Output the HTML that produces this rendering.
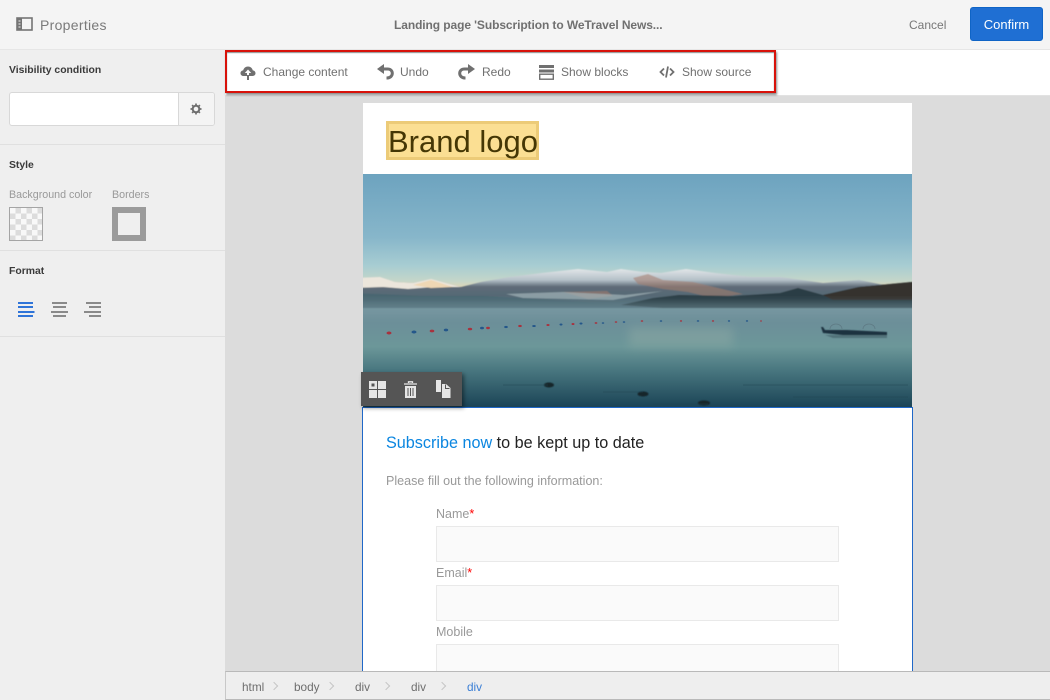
<!DOCTYPE html>
<html><head><meta charset="utf-8">
<style>
html,body{margin:0;padding:0}
body{width:1050px;height:700px;position:relative;overflow:hidden;background:#dcdcdc;font-family:"Liberation Sans",sans-serif;color:#6e6e6e}
.a{position:absolute;white-space:nowrap}
svg{position:absolute;overflow:visible}
.lb{font-size:12px;line-height:16px;color:#707070}
.h{font-size:10.4px;font-weight:bold;color:#3a3a3a;line-height:14px}
.sl{font-size:10.7px;color:#999;line-height:14px}
.fl{font-size:12.5px;color:#999;line-height:14px}
.in{position:absolute;left:436px;width:401px;height:34px;background:#fafafa;border:1px solid #e9e9e9}
.bc{font-size:11.8px;line-height:14px;color:#6e6e6e;top:680px}
.ch{position:absolute;top:683px;width:5px;height:5px;border-top:1px solid #c6c6c6;border-right:1px solid #c6c6c6;transform:rotate(45deg)}
</style></head><body>
<div class="a" style="left:0;top:0;width:1050px;height:50px;background:#f4f4f4;border-bottom:1px solid #e6e6e6;box-sizing:border-box"></div>
<svg style="left:16px;top:17px" width="17" height="15" viewBox="0 0 17 15"><rect x="1" y="1" width="15" height="12" fill="none" stroke="#747474" stroke-width="1.6"/><rect x="1" y="1" width="5" height="12" fill="#747474"/><path d="M2.500 4h2M2.500 7h2M2.500 10h2" stroke="#f4f4f4" stroke-width="1"/></svg>
<div class="a" style="left:40px;top:16px;font-size:14px;line-height:18px;color:#7a7a7a;letter-spacing:.3px">Properties</div>
<div class="a" style="left:394px;top:17px;font-size:12px;line-height:16px;font-weight:bold;color:#707070;letter-spacing:-.09px">Landing page 'Subscription to WeTravel News...</div>
<div class="a" style="left:909px;top:17px;font-size:12px;line-height:16px;color:#777">Cancel</div>
<div class="a" style="left:970px;top:7px;width:73px;height:34px;background:#1f6fd3;border:1px solid #0f64c6;box-sizing:border-box;border-radius:3px;color:#fff;font-size:13px;line-height:34px;text-align:center">Confirm</div>

<!-- sidebar -->
<div class="a" style="left:0;top:50px;width:225px;height:650px;background:#efefef"></div>
<div class="a h" style="left:9px;top:64px">Visibility condition</div>
<div class="a" style="left:9px;top:92px;width:206px;height:34px;box-sizing:border-box;background:#fff;border:1px solid #d8d8d8;border-radius:3px"></div>
<div class="a" style="left:178px;top:93px;width:36px;height:32px;box-sizing:border-box;background:#f4f4f4;border-left:1px solid #d8d8d8;border-radius:0 2px 2px 0"></div>
<svg style="left:190px;top:103px" width="12" height="12" viewBox="0 0 12 12"><circle cx="6" cy="6" r="3.300" fill="none" stroke="#6e6e6e" stroke-width="2"/><path d="M6 .5v2M6 9.500v2M.5 6h2M9.500 6h2M2.100 2.100l1.400 1.400M8.500 8.500l1.400 1.400M2.100 9.900l1.400-1.400M8.500 3.500l1.400-1.400" stroke="#6e6e6e" stroke-width="1.700"/></svg>
<div class="a" style="left:0;top:144px;width:225px;height:1px;background:#e0e0e0"></div>
<div class="a h" style="left:9px;top:159px">Style</div>
<div class="a sl" style="left:9px;top:188px">Background color</div>
<div class="a sl" style="left:112px;top:188px">Borders</div>
<div class="a" style="left:9px;top:207px;width:34px;height:34px;box-sizing:border-box;border:1px solid #a5a5a5;background-color:#f8f8f8;background-image:linear-gradient(45deg,#dcdcdc 25%,transparent 25%,transparent 75%,#dcdcdc 75%),linear-gradient(45deg,#dcdcdc 25%,transparent 25%,transparent 75%,#dcdcdc 75%);background-size:11px 11px;background-position:0 0,5.500px 5.500px"></div>
<div class="a" style="left:112px;top:207px;width:34px;height:34px;box-sizing:border-box;border:6px solid #9b9b9b;background:#efefef"></div>
<div class="a" style="left:0;top:250px;width:225px;height:1px;background:#e0e0e0"></div>
<div class="a h" style="left:9px;top:265px">Format</div>
<svg style="left:18px;top:302px" width="84" height="16" viewBox="0 0 84 16">
<path d="M0 1h15M0 5h15M0 10h16.500M0 14h15" stroke="#2f74d8" stroke-width="2" fill="none"/>
<path d="M34 1h15M35 5h13M33 10h17M35 14h13" stroke="#8a8a8a" stroke-width="2" fill="none"/>
<path d="M68 1h15M71 5h12M66 10h17M71 14h12" stroke="#8a8a8a" stroke-width="2" fill="none"/>
</svg>
<div class="a" style="left:0;top:336px;width:225px;height:1px;background:#e0e0e0"></div>

<!-- toolbar -->
<div class="a" style="left:225px;top:50px;width:825px;height:46px;background:#fff;border-bottom:1px solid #e2e2e2;box-sizing:border-box"></div>
<div class="a" style="left:225px;top:50px;width:551px;height:43px;box-sizing:border-box;border:2px solid #d8120a;box-shadow:1px 2px 2px rgba(0,0,0,.45),inset 0 1px 1px rgba(0,0,0,.45);background:#fff"></div>
<svg style="left:240px;top:65px" width="16" height="15" viewBox="0 0 16 15"><path d="M3.500 11C1.500 11 .5 9.500.5 8.200.5 6.700 1.700 5.500 3.200 5.400 3.800 3 5.700 1.500 8 1.500c2.300 0 4.200 1.500 4.800 3.900 1.500.1 2.700 1.300 2.700 2.800 0 1.300-1 2.800-3 2.800z" fill="#707070"/><path d="M8 4.500 4.800 8H7v3h2V8h2.200z" fill="#fff"/><rect x="7" y="10" width="2" height="5" fill="#707070"/></svg>
<div class="a lb" style="left:263px;top:64px">Change content</div>
<svg style="left:377px;top:64px" width="17" height="16" viewBox="0 0 17 16"><path d="M7 0v10L0 5z" fill="#707070"/><path d="M6 5h4.500c3 0 4.800 1.800 4.800 4.300S13.500 14 9.500 14" fill="none" stroke="#707070" stroke-width="3"/></svg>
<div class="a lb" style="left:400px;top:64px">Undo</div>
<svg style="left:458px;top:64px" width="17" height="16" viewBox="0 0 17 16"><path d="M10 0v10l7-5z" fill="#707070"/><path d="M11 5H6.500C3.500 5 1.700 6.800 1.700 9.300S3.500 14 7.500 14" fill="none" stroke="#707070" stroke-width="3"/></svg>
<div class="a lb" style="left:482px;top:64px">Redo</div>
<svg style="left:539px;top:65px" width="15" height="15" viewBox="0 0 15 15"><path d="M0 0h15v3H0zM0 4.500h15v3H0z" fill="#707070"/><rect x=".7" y="9.200" width="13.600" height="5" fill="none" stroke="#707070" stroke-width="1.400"/></svg>
<div class="a lb" style="left:561px;top:64px">Show blocks</div>
<svg style="left:659px;top:66px" width="16" height="12" viewBox="0 0 16 12"><path d="M5 2.500 1.500 6 5 9.500M11 2.500 14.500 6 11 9.500" fill="none" stroke="#707070" stroke-width="1.800"/><path d="M9 .5 7 11.500" stroke="#707070" stroke-width="1.800"/></svg>
<div class="a lb" style="left:682px;top:64px">Show source</div>

<!-- page -->
<div class="a" style="left:363px;top:103px;width:549px;height:597px;background:#fff"></div>
<div class="a" style="left:386px;top:121px;width:153px;height:39px;box-sizing:border-box;background:#fbdf93;border:3px solid #eccb78;color:#453705;font-size:31px;line-height:35px;text-indent:-1px">Brand logo</div>

<svg style="left:363px;top:174px;overflow:hidden" width="549" height="233" viewBox="0 0 549 233">
<defs>
<linearGradient id="s" x1="0" y1="0" x2="0" y2="1"><stop offset="0" stop-color="#6da3bf"/><stop offset=".55" stop-color="#87b6ca"/><stop offset=".8" stop-color="#a8cdd2"/><stop offset=".93" stop-color="#c5d6c9"/><stop offset="1" stop-color="#e6d7b2"/></linearGradient>
<linearGradient id="w" x1="0" y1="0" x2="0" y2="1"><stop offset="0" stop-color="#6f909b"/><stop offset=".2" stop-color="#6c8f99"/><stop offset=".42" stop-color="#6c9799"/><stop offset=".65" stop-color="#48767f"/><stop offset="1" stop-color="#1b4456"/></linearGradient>
<linearGradient id="m" gradientUnits="userSpaceOnUse" x1="0" y1="95" x2="0" y2="132"><stop offset="0" stop-color="#e2e6e8"/><stop offset=".3" stop-color="#b4c0c8"/><stop offset=".48" stop-color="#5f6c78"/><stop offset="1" stop-color="#4a6572"/></linearGradient>
<filter id="b1"><feGaussianBlur stdDeviation=".6"/></filter>
<filter id="b4" x="-20%" y="-80%" width="140%" height="260%"><feGaussianBlur stdDeviation="5"/></filter>
</defs>
<rect width="549" height="115" fill="url(#s)"/>
<rect y="129" width="549" height="104" fill="url(#w)"/>
<g filter="url(#b1)">
<path d="M-10 104 17 103 32 108 50 109 68 105 98 113 118 108 147 103 179 99 215 95 244 98 258 95 280 98 298 99 323 95 352 99 388 103 417 103 460 109 496 106 521 111 560 112V134H-10z" fill="url(#m)"/>
<path d="M-10 104 17 103 32 108 50 109 68 105 98 113 70 113 45 115 20 113-10 114z" fill="#ece6dc"/>
<path d="M50 111 68 106 90 113 68 114z" fill="#efd7b4"/>
<path d="M270 104 285 100 300 106 330 108 380 120 350 124 325 118 300 115 275 110z" fill="#a67c6c" opacity=".55"/>
<path d="M200 118 244 117 250 122 225 125z" fill="#a17a6b" opacity=".6"/>
<path d="M143 120 200 118 262 121 300 117 250 126 160 124z" fill="#a3b3b8" opacity=".7"/>
<path d="M-10 119 60 122 120 122 190 126 258 131-10 133z" fill="#4a6671"/>
<path d="M258 131 290 124 316 121 370 122 417 119 435 114 460 121 496 113 548 108 560 107V134H300z" fill="#2c3d44"/>
<path d="M460 121 496 113 560 107V126H470z" fill="#34332f"/>
</g>
<rect x="-20" y="130" width="590" height="10" fill="#7f9da5" opacity=".65" filter="url(#b4)"/>
<rect x="266" y="153" width="104" height="20" fill="#a3b7aa" opacity=".3" filter="url(#b4)"/>
<g fill="#24578a"><ellipse cx="51" cy="158" rx="2.500" ry="1.500"/><ellipse cx="83" cy="156" rx="2.200" ry="1.400"/><ellipse cx="119" cy="154" rx="2" ry="1.300"/><ellipse cx="143" cy="153" rx="1.800" ry="1.100"/><ellipse cx="171" cy="152" rx="1.800" ry="1"/><ellipse cx="198" cy="150.500" rx="1.500" ry="1"/><ellipse cx="218" cy="149.500" rx="1.500" ry="1"/><ellipse cx="240" cy="149" rx="1.300" ry=".8"/><ellipse cx="261" cy="148" rx="1.300" ry=".8"/><ellipse cx="298" cy="147" rx="1.300" ry=".8"/><ellipse cx="335" cy="147" rx="1.300" ry=".7"/><ellipse cx="366" cy="147" rx="1.200" ry=".7"/><ellipse cx="384" cy="147" rx="1.200" ry=".7"/></g>
<g fill="#a8323e"><ellipse cx="26" cy="159" rx="2.500" ry="1.500"/><ellipse cx="69" cy="157" rx="2.300" ry="1.400"/><ellipse cx="107" cy="155" rx="2.200" ry="1.300"/><ellipse cx="125" cy="154" rx="1.900" ry="1.200"/><ellipse cx="157" cy="152" rx="1.800" ry="1.100"/><ellipse cx="185" cy="151" rx="1.600" ry="1"/><ellipse cx="210" cy="150" rx="1.500" ry="1"/><ellipse cx="233" cy="149" rx="1.400" ry=".9"/><ellipse cx="253" cy="148" rx="1.300" ry=".8"/><ellipse cx="279" cy="147" rx="1.300" ry=".8"/><ellipse cx="318" cy="147" rx="1.200" ry=".7"/><ellipse cx="350" cy="147" rx="1.200" ry=".7"/><ellipse cx="398" cy="147" rx="1" ry=".6"/></g>
<g filter="url(#b1)"><path d="M458 153h2l2 3h22l40 2v3h-44l-20-2z" fill="#1f3240"/><path d="M462 161h62v3h-54z" fill="#3f5a66" opacity=".6"/></g>
<path d="M467 155a6 5 0 0 1 12 0M500 155a6 5 0 0 1 12 0" fill="none" stroke="#5e7a84" stroke-width=".8"/>
<g fill="#13252c" filter="url(#b1)"><ellipse cx="186" cy="211" rx="5" ry="2.500"/><ellipse cx="280" cy="220" rx="5.500" ry="2.500"/><ellipse cx="341" cy="229" rx="6" ry="2.500"/></g>
<g stroke="#1f4350" stroke-width=".7" opacity=".6"><path d="M140 211h45M240 218h40M290 230h55M380 211h165M430 223h115"/></g>
</svg>

<!-- selected block -->
<div class="a" style="left:362px;top:407px;width:551px;height:293px;box-sizing:border-box;border:1px solid #2068c8;border-bottom:0"></div>
<div class="a" style="left:361px;top:372px;width:101px;height:34px;background:#555;box-shadow:2px 2px 4px rgba(0,0,0,.45)"></div>
<svg style="left:369px;top:381px" width="17" height="17" viewBox="0 0 17 17"><path d="M0 0h8v8H0zM9 0h8v8H9zM0 9h8v8H0zM9 9h8v8H9z" fill="#e6e6e6"/><rect x="2.500" y="2.500" width="3" height="3" fill="#555"/></svg>
<svg style="left:403px;top:381px" width="15" height="17" viewBox="0 0 15 17"><path d="M5.500 2V.8h4V2M1 3h13" stroke="#e6e6e6" stroke-width="1.300" fill="none"/><path d="M2 5h11v12H2z" fill="#e6e6e6"/><path d="M5 7v8M7.500 7v8M10 7v8" stroke="#555" stroke-width="1"/></svg>
<svg style="left:436px;top:380px" width="15" height="18" viewBox="0 0 15 18"><path d="M0 0h5v12H0z" fill="#e6e6e6"/><path d="M6 4h4l4.500 4v10H6z" fill="#e6e6e6"/><path d="M9.500 4.500v4h4" fill="none" stroke="#555" stroke-width="1"/></svg>

<div class="a" style="left:386px;top:433px;font-size:16.200px;line-height:20px;color:#222"><span style="color:#0b86e0">Subscribe now</span> to be kept up to date</div>
<div class="a" style="left:386px;top:474px;font-size:12.550px;line-height:15px;color:#999">Please fill out the following information:</div>
<div class="a fl" style="left:436px;top:507px">Name<span style="color:#f00">*</span></div>
<div class="in" style="top:526px"></div>
<div class="a fl" style="left:436px;top:566px">Email<span style="color:#f00">*</span></div>
<div class="in" style="top:585px"></div>
<div class="a fl" style="left:436px;top:625px">Mobile</div>
<div class="in" style="top:644px"></div>

<!-- breadcrumb -->
<div class="a" style="left:225px;top:671px;width:825px;height:29px;box-sizing:border-box;background:#eeeeee;border-top:1px solid #b9b9b9;border-bottom:1px solid #b9b9b9;border-left:1px solid #c8c8c8"></div>
<div class="a bc" style="left:242px">html</div><div class="ch" style="left:271px"></div>
<div class="a bc" style="left:294px">body</div><div class="ch" style="left:327px"></div>
<div class="a bc" style="left:355px">div</div><div class="ch" style="left:383px"></div>
<div class="a bc" style="left:411px">div</div><div class="ch" style="left:439px"></div>
<div class="a bc" style="left:467px;color:#3b7fd6">div</div>
</body></html>
